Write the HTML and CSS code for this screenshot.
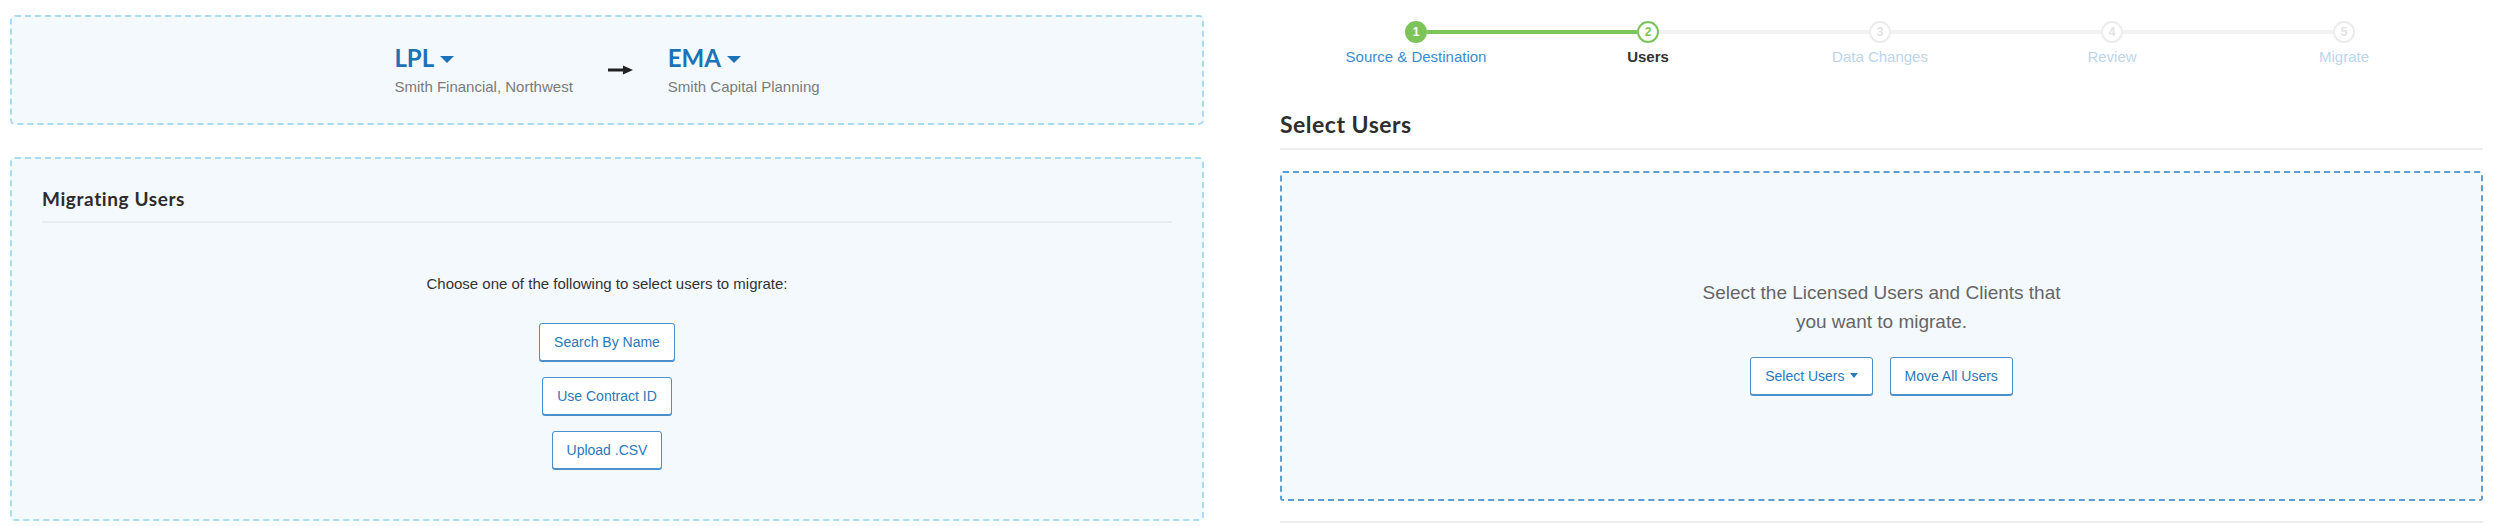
FILE: index.html
```html
<!DOCTYPE html>
<html lang="en">
<head>
    <meta charset="UTF-8">
    <meta name="viewport" content="width=device-width, initial-scale=1.0">
    <title>Migrate Users</title>
    <link rel="stylesheet" href="styles.css">
</head>
<body>
    <main class="page">
        <section class="migration">
            <div class="card orgs">
                <div class="org">
                    <div class="org-name">LPL <span class="caret"></span></div>
                    <div class="org-sub">Smith Financial, Northwest</div>
                </div>
                <svg class="org-arrow" width="25" height="10" viewBox="0 0 25 10">
                    <path d="M0 5 H17" stroke="#222" stroke-width="3"/>
                    <path d="M15 0.5 L25 5 L15 9.5 Z" fill="#222"/>
                </svg>
                <div class="org">
                    <div class="org-name">EMA <span class="caret"></span></div>
                    <div class="org-sub">Smith Capital Planning</div>
                </div>
            </div>

            <div class="card users">
                <h2>Migrating Users</h2>
                <p class="users-hint">Choose one of the following to select users to migrate:</p>
                <div class="users-options">
                    <a href="#" class="btn">Search By Name</a>
                    <a href="#" class="btn">Use Contract ID</a>
                    <a href="#" class="btn">Upload .CSV</a>
                </div>
            </div>
        </section>

        <section class="wizard">
            <ol class="steps">
                <li class="step done">
                    <div class="track"><span class="dot">1</span></div>
                    <span class="step-label">Source &amp; Destination</span>
                </li>
                <li class="step current">
                    <div class="track"><span class="dot">2</span></div>
                    <span class="step-label">Users</span>
                </li>
                <li class="step">
                    <div class="track"><span class="dot">3</span></div>
                    <span class="step-label">Data Changes</span>
                </li>
                <li class="step">
                    <div class="track"><span class="dot">4</span></div>
                    <span class="step-label">Review</span>
                </li>
                <li class="step">
                    <div class="track"><span class="dot">5</span></div>
                    <span class="step-label">Migrate</span>
                </li>
            </ol>

            <h2 class="wizard-title">Select Users</h2>

            <div class="dropzone">
                <p>Select the Licensed Users and Clients that you want to migrate.</p>
                <div class="dropzone-actions">
                    <a href="#" class="btn">Select Users <span class="caret small"></span></a>
                    <a href="#" class="btn">Move All Users</a>
                </div>
            </div>

            <div class="wizard-footer"></div>
        </section>
    </main>
</body>
</html>
```

FILE: styles.css
```css
* {
    margin: 0;
    padding: 0;
    box-sizing: border-box;
}
body {
    background: #fff;
    font-family: "Liberation Sans", Arial, sans-serif;
    font-size: 14px;
    color: #333;
}
.page {
    display: flex;
    gap: 76px;
    padding: 0 17px 0 10px;
}

/* left column */
.migration {
    width: 1194px;
    flex: none;
    padding-top: 15px;
}
.card {
    background: #f4f9fe;
    border: 2px dashed #a9dbf3;
    border-radius: 5px;
}
.orgs {
    height: 110px;
    display: flex;
    align-items: center;
    justify-content: center;
}
.org-name {
    display: flex;
    align-items: center;
    gap: 6px;
    font-family: Lato, "Liberation Sans", sans-serif;
    font-weight: 700;
    font-size: 24px;
    line-height: 28px;
    color: #1b72b7;
}
.org-sub {
    margin-top: 6px;
    font-size: 15px;
    line-height: 18px;
    color: #7b7b7b;
}
.org-arrow {
    margin: 0 35px;
    flex: none;
}
.caret {
    display: inline-block;
    width: 0;
    height: 0;
    border-left: 7px solid transparent;
    border-right: 7px solid transparent;
    border-top: 7px solid #1b72b7;
    margin-top: 2px;
}
.caret.small {
    border-left-width: 4px;
    border-right-width: 4px;
    border-top-width: 5px;
    border-top-color: #2a79bd;
    margin: 0 0 0 5px;
    vertical-align: 2px;
}

.users {
    margin-top: 32px;
    height: 364px;
    padding: 0 30px;
}
.users h2 {
    padding-top: 28px;
    padding-bottom: 10px;
    border-bottom: 2px solid #e8edf1;
    font-family: Lato, "Liberation Sans", sans-serif;
    font-weight: 700;
    font-size: 19px;
    line-height: 24px;
    letter-spacing: 0.6px;
    color: #2c2c2c;
}
.users-hint {
    margin-top: 51px;
    font-size: 15px;
    line-height: 20px;
    text-align: center;
    color: #333;
}
.users-options {
    margin-top: 29px;
    display: flex;
    flex-direction: column;
    align-items: center;
    gap: 16px;
}
.btn {
    display: inline-flex;
    align-items: center;
    height: 38px;
    padding: 0 14px;
    background: #fff;
    border: 1px solid #4b8fcb;
    border-radius: 3px;
    box-shadow: 0 1px 0 #4b8fcb;
    color: #2a79bd;
    text-decoration: none;
    font-size: 14px;
}

/* right column */
.wizard {
    flex: 1;
}
.steps {
    list-style: none;
    display: flex;
    margin: 0 23px 0 20px;
    padding-top: 21px;
}
.step {
    flex: 1;
    display: flex;
    flex-direction: column;
    align-items: center;
}
.track {
    width: 100%;
    height: 22px;
    display: flex;
    align-items: center;
}
.track::before,
.track::after {
    content: '';
    flex: 1;
    height: 4px;
    background: #f2f2f2;
}
.step:first-child .track::before,
.step:last-child .track::after {
    visibility: hidden;
}
.step.done .track::after,
.step.current .track::before {
    background: #7cc45a;
}
.dot {
    width: 22px;
    height: 22px;
    flex: none;
    border-radius: 50%;
    border: 2px solid #ececec;
    background: #fff;
    color: #e2e2e2;
    font-size: 12px;
    font-weight: 700;
    display: flex;
    align-items: center;
    justify-content: center;
}
.step.done .dot {
    background: #7cc45a;
    border-color: #7cc45a;
    color: #fff;
}
.step.current .dot {
    border-color: #7cc45a;
    color: #7cc45a;
}
.step-label {
    margin-top: 5px;
    font-size: 15px;
    line-height: 18px;
    color: #bcd5ec;
}
.step.done .step-label {
    color: #3b8dcf;
}
.step.current .step-label {
    color: #333;
    font-weight: 700;
}

.wizard-title {
    margin-top: 44px;
    padding-bottom: 10px;
    border-bottom: 2px solid #ededed;
    font-family: Lato, "Liberation Sans", sans-serif;
    font-weight: 700;
    font-size: 23px;
    line-height: 28px;
    letter-spacing: 0.5px;
    color: #2e2e2e;
}
.dropzone {
    margin-top: 21px;
    height: 330px;
    background: #f4f9fe;
    border: 2px dashed #5d9fd3;
    border-radius: 3px;
    display: flex;
    flex-direction: column;
    align-items: center;
    justify-content: center;
}
.dropzone p {
    max-width: 380px;
    text-align: center;
    font-size: 19px;
    line-height: 29px;
    color: #666;
}
.dropzone-actions {
    margin-top: 21px;
    display: flex;
    gap: 17px;
}
.wizard-footer {
    margin-top: 20px;
    border-top: 2px solid #ededed;
}
```
